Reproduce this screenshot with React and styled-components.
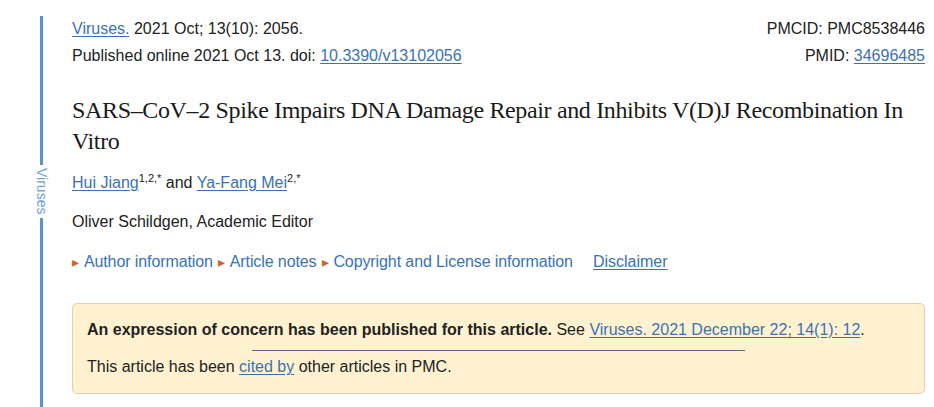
import React from 'react';
import styled, { createGlobalStyle } from 'styled-components';

const GlobalStyle = createGlobalStyle`
	html, body {
		margin: 0;
		padding: 0;
		background: #fff;
	}

	body {
		font-family: 'Liberation Sans', Arial, sans-serif;
		color: #222;
	}
`;

const article = {
	journal: 'Viruses.',
	citation: '2021 Oct; 13(10): 2056.',
	doi: '10.3390/v13102056',
	pmcid: 'PMC8538446',
	pmid: '34696485',
	title: 'SARS–CoV–2 Spike Impairs DNA Damage Repair and Inhibits V(D)J Recombination In Vitro',
	authors: [
		{ name: 'Hui Jiang', sup: '1,2,*' },
		{ name: 'Ya-Fang Mei', sup: '2,*' },
	],
	editor: 'Oliver Schildgen, Academic Editor',
	toggles: ['Author information', 'Article notes', 'Copyright and License information'],
};

export default function App() {
	return (
		<>
			<GlobalStyle />
			<Page>
				<Sidebar>
					<BarSegment $top />
					<JournalLabel>Viruses</JournalLabel>
					<BarSegment />
				</Sidebar>

				<Content>
					<MetaRow>
						<div>
							<Link href="#">{article.journal}</Link> {article.citation}
						</div>
						<div>PMCID: {article.pmcid}</div>
					</MetaRow>
					<MetaRow>
						<div>
							Published online 2021 Oct 13. doi: <Link href="#">{article.doi}</Link>
						</div>
						<div>
							PMID: <Link href="#">{article.pmid}</Link>
						</div>
					</MetaRow>

					<Title>{article.title}</Title>

					<Authors>
						<Link href="#">{article.authors[0].name}</Link>
						<sup>{article.authors[0].sup}</sup> and{' '}
						<Link href="#">{article.authors[1].name}</Link>
						<sup>{article.authors[1].sup}</sup>
					</Authors>

					<Editor>{article.editor}</Editor>

					<Toggles>
						{article.toggles.map((t) => (
							<Toggle key={t}>
								<Arrow>▸</Arrow>
								{t}
							</Toggle>
						))}
						<Disclaimer href="#">Disclaimer</Disclaimer>
					</Toggles>

					<Notice>
						<NoticeLine>
							<strong>An expression of concern has been published for this article.</strong> See{' '}
							<Link href="#">Viruses. 2021 December 22; 14(1): 12</Link>.
						</NoticeLine>
						<Divider />
						<NoticeLine>
							This article has been <Link href="#">cited by</Link> other articles in PMC.
						</NoticeLine>
					</Notice>
				</Content>
			</Page>
		</>
	);
}

const Page = styled.div`
	display: flex;
	min-height: 407px;
`;

const Sidebar = styled.div`
	display: flex;
	flex-direction: column;
	align-items: center;
	width: 17px;
	margin-left: 33px;
	padding-top: 16px;
	gap: 2px;
`;

const BarSegment = styled.div`
	width: 3px;
	background-color: #5b95cf;
	height: ${({ $top }) => ($top ? '149px' : 'auto')};
	flex: ${({ $top }) => ($top ? 'none' : '1')};
`;

const JournalLabel = styled.div`
	writing-mode: vertical-rl;
	font-size: 14px;
	line-height: 14px;
	color: #6c9fd4;
	padding: 1px 0 2px;
`;

const Content = styled.div`
	flex: 1;
	margin-left: 22px;
	margin-right: 9px;
	padding-top: 20px;
	font-size: 16px;
`;

const MetaRow = styled.div`
	display: flex;
	justify-content: space-between;
	line-height: 18px;
	margin-bottom: 9px;
`;

const Link = styled.a`
	color: #3a72b6;
	text-decoration: underline;
	text-underline-offset: 2px;
`;

const Title = styled.h1`
	font-family: 'Liberation Serif', 'Times New Roman', serif;
	font-weight: normal;
	font-size: 24px;
	letter-spacing: -0.35px;
	line-height: 31px;
	margin: 30px 0 17px;
	color: #1a1a1a;
`;

const Authors = styled.div`
	line-height: 18px;

	sup {
		font-size: 11px;
		line-height: 0;
	}
`;

const Editor = styled.div`
	margin-top: 21px;
	line-height: 18px;
`;

const Toggles = styled.div`
	display: flex;
	align-items: baseline;
	margin-top: 22px;
	line-height: 18px;
`;

const Toggle = styled.span`
	color: #3a72b6;
	margin-right: 5px;
	letter-spacing: -0.1px;
`;

const Arrow = styled.span`
	color: #d0622a;
	font-size: 14px;
	margin-right: 5px;
`;

const Disclaimer = styled(Link)`
	margin-left: 15px;
`;

const Notice = styled.div`
	margin-top: 32px;
	background-color: #fff2d1;
	border: 1px solid #e8cbb0;
	border-radius: 5px;
	padding: 17px 14px 17px;
`;

const NoticeLine = styled.div`
	line-height: 18px;
`;

const Divider = styled.hr`
	width: 60%;
	margin: 11px auto 7px;
	border: none;
	border-top: 1px solid #5a6493;
`;
